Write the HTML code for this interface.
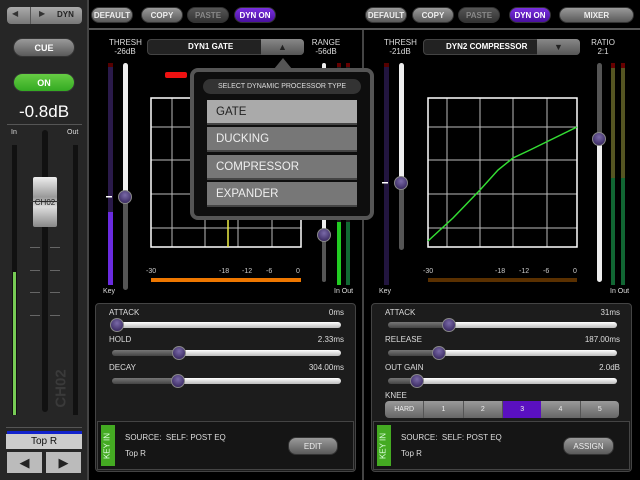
<!DOCTYPE html>
<html><head><meta charset="utf-8"><style>
*{margin:0;padding:0;box-sizing:border-box}
body{width:640px;height:480px;background:#000;position:relative;overflow:hidden;font-family:"Liberation Sans",sans-serif;color:#ddd}
.a{position:absolute}
.btn{position:absolute;height:16px;border-radius:8px;background:linear-gradient(#9a9a9a,#5a5a5a);color:#eee;font-size:8px;font-weight:bold;text-align:center;line-height:16px;border:1px solid #333}
.pur{background:linear-gradient(#7a30e0,#4a10a0);color:#fff}
.dk{background:linear-gradient(#555,#333);color:#888}
.lbl{position:absolute;font-size:8px;color:#ddd}
.track{position:absolute;height:6px;border-radius:3px;background:linear-gradient(#fff,#bbb)}
.trk0{position:absolute;height:6px;border-radius:3px;background:linear-gradient(#777,#444)}
.knob{position:absolute;width:14px;height:14px;border-radius:7px;background:radial-gradient(circle at 50% 35%,#7a6aa8,#2a1a50);border:1px solid #888}
.item{position:absolute;left:207px;width:150px;height:25px;background:#777;color:#eee;font-size:11.5px;line-height:25px;padding-left:9px;border-bottom:2px solid #444}
.kin{position:absolute;width:41px;height:14px;font-size:8px;color:#dfd;transform:rotate(-90deg);text-align:center;line-height:14px}
</style></head><body>
<div class="a" style="left:0;top:0;width:88px;height:480px;background:#262626"></div>
<div class="a" style="left:7px;top:7px;width:75px;height:17px;border-radius:4px;background:linear-gradient(#aaa,#777)"></div>
<div class="a" style="left:30px;top:7px;width:1px;height:17px;background:#555"></div>
<div class="a" style="left:12px;top:9px;font-size:8px;color:#333">◀</div>
<div class="a" style="left:39px;top:9px;font-size:8px;color:#333">▶</div>
<div class="a" style="left:57px;top:10px;font-size:8px;font-weight:bold;color:#222">DYN</div>
<div class="btn" style="left:13px;top:38px;width:62px;height:19px;line-height:19px;border-radius:10px;font-size:9px;color:#fff">CUE</div>
<div class="btn" style="left:13px;top:73px;width:62px;height:19px;line-height:19px;border-radius:10px;font-size:9px;background:linear-gradient(#6c4,#3a2);color:#fff">ON</div>
<div class="a" style="left:0;width:88px;top:102px;text-align:center;font-size:17px;color:#fff">-0.8dB</div>
<div class="a" style="left:7px;top:124px;width:75px;height:1px;background:#555"></div>
<div class="lbl" style="left:11px;top:129px;font-size:7px">In</div>
<div class="lbl" style="left:67px;top:129px;font-size:7px">Out</div>
<div class="a" style="left:12px;top:145px;width:5px;height:270px;background:#111"></div>
<div class="a" style="left:13px;top:272px;width:3px;height:143px;background:#7c5"></div>
<div class="a" style="left:73px;top:145px;width:5px;height:270px;background:#111"></div>
<div class="a" style="left:42px;top:130px;width:6px;height:282px;background:#111;border-radius:3px"></div>
<div class="a" style="left:30px;top:247px;width:10px;height:1px;background:#666;box-shadow:0 23px #666,0 45px #666,0 68px #666"></div>
<div class="a" style="left:50px;top:247px;width:10px;height:1px;background:#666;box-shadow:0 23px #666,0 45px #666,0 68px #666"></div>
<div class="a" style="left:33px;top:177px;width:24px;height:50px;background:linear-gradient(#eee,#999 40%,#ddd 60%,#888);border-radius:2px"></div>
<div class="a" style="left:30px;top:201px;width:29px;height:1px;background:#333"></div>
<div class="a" style="left:33px;top:198px;width:24px;text-align:center;font-size:8px;color:#222">CH02</div>
<div class="a" style="left:42px;top:380px;font-size:15px;font-weight:bold;color:#3a3a3a;transform:rotate(-90deg)">CH02</div>
<div class="a" style="left:6px;top:427px;width:76px;height:1px;background:#555"></div>
<div class="a" style="left:7px;top:431px;width:75px;height:3px;background:#12c"></div>
<div class="a" style="left:6px;top:434px;width:76px;height:15px;background:#ccc;color:#111;font-size:10px;text-align:center;line-height:15px">Top R</div>
<div class="a" style="left:7px;top:452px;width:35px;height:21px;background:#bbb;color:#222;font-size:13px;text-align:center;line-height:21px">◀</div>
<div class="a" style="left:46px;top:452px;width:35px;height:21px;background:#bbb;color:#222;font-size:13px;text-align:center;line-height:21px">▶</div>
<div class="a" style="left:87px;top:0;width:2px;height:480px;background:#444"></div>
<div class="a" style="left:89px;top:28px;width:551px;height:2px;background:#555"></div>
<div class="btn" style="left:91px;top:7px;width:42px">DEFAULT</div>
<div class="btn" style="left:141px;top:7px;width:42px">COPY</div>
<div class="btn dk" style="left:187px;top:7px;width:42px">PASTE</div>
<div class="btn pur" style="left:234px;top:7px;width:42px">DYN ON</div>
<div class="btn" style="left:365px;top:7px;width:42px">DEFAULT</div>
<div class="btn" style="left:412px;top:7px;width:42px">COPY</div>
<div class="btn dk" style="left:458px;top:7px;width:42px">PASTE</div>
<div class="btn pur" style="left:509px;top:7px;width:42px">DYN ON</div>
<div class="btn" style="left:559px;top:7px;width:75px">MIXER</div>
<div class="a" style="left:362px;top:30px;width:2px;height:450px;background:#444"></div>

<svg class="a" style="left:0;top:0" width="640" height="480">
<g stroke="#bbb" stroke-width="1" fill="none">
<path d="M172 98V247M205 98V247M238 98V247M272 98V247M151 127H301M151 160H301M151 194H301M151 228H301"/>
<path d="M447 98V247M480 98V247M513 98V247M547 98V247M428 127H577M428 160H577M428 194H577M428 228H577"/>
</g>
<rect x="151" y="98" width="150" height="149" fill="none" stroke="#fff" stroke-width="1.5"/>
<rect x="428" y="98" width="149" height="149" fill="none" stroke="#fff" stroke-width="1.5"/>
<path d="M228 220V247" stroke="#ee4" stroke-width="1.5"/>
<path d="M428 241L453 218L480 190L498 170L513 158L530 150L577 127" stroke="#3d3" stroke-width="1.5" fill="none"/>
<g font-family="Liberation Sans" font-size="7" fill="#ccc">
<text x="146" y="273">-30</text><text x="219" y="273">-18</text><text x="242" y="273">-12</text><text x="266" y="273">-6</text><text x="296" y="273">0</text>
<text x="423" y="273">-30</text><text x="495" y="273">-18</text><text x="519" y="273">-12</text><text x="543" y="273">-6</text><text x="573" y="273">0</text>
</g>
<rect x="151" y="278" width="150" height="4" fill="#e70"/>
<rect x="428" y="278" width="149" height="4" fill="#5a3000"/>
<rect x="165" y="72" width="22" height="6" rx="2" fill="#e11"/>
<rect x="108" y="63" width="5" height="222" fill="#2a1a4a"/><rect x="108" y="212" width="5" height="73" fill="#6a2be0"/><rect x="108" y="63" width="5" height="4" fill="#500"/>
<rect x="106" y="196" width="6" height="1.5" fill="#fff"/>
<rect x="123" y="63" width="5" height="134" rx="2.5" fill="#eee"/><rect x="123" y="197" width="5" height="93" rx="2.5" fill="#555"/>
<rect x="322" y="63" width="4" height="172" rx="2" fill="#eee"/><rect x="322" y="235" width="4" height="47" rx="2" fill="#555"/>
<rect x="337" y="63" width="4" height="222" fill="#1a1a1a"/><rect x="337" y="222" width="4" height="63" fill="#2c2"/><rect x="337" y="63" width="4" height="4" fill="#600"/>
<rect x="346" y="63" width="4" height="222" fill="#1a1a1a"/><rect x="346" y="222" width="4" height="63" fill="#163"/><rect x="346" y="63" width="4" height="4" fill="#600"/>
<rect x="384" y="63" width="5" height="222" fill="#22153f"/><rect x="384" y="63" width="5" height="4" fill="#500"/>
<rect x="382" y="182" width="6" height="1.5" fill="#fff"/>
<rect x="399" y="63" width="5" height="120" rx="2.5" fill="#eee"/><rect x="399" y="183" width="5" height="67" rx="2.5" fill="#555"/>
<rect x="597" y="63" width="5" height="76" rx="2.5" fill="#555"/><rect x="597" y="139" width="5" height="143" rx="2.5" fill="#eee"/>
<rect x="611" y="63" width="4" height="222" fill="#163"/><rect x="611" y="68" width="4" height="110" fill="#552"/><rect x="611" y="63" width="4" height="5" fill="#600"/>
<rect x="621" y="63" width="4" height="222" fill="#163"/><rect x="621" y="68" width="4" height="110" fill="#552"/><rect x="621" y="63" width="4" height="5" fill="#600"/>
</svg>
<div class="knob" style="left:118px;top:190px"></div>
<div class="knob" style="left:317px;top:228px"></div>
<div class="knob" style="left:394px;top:176px"></div>
<div class="knob" style="left:592px;top:132px"></div>
<div class="lbl" style="left:109px;top:38px;text-align:center;width:32px">THRESH<br>-26dB</div>
<div class="lbl" style="left:309px;top:38px;text-align:center;width:34px">RANGE<br>-56dB</div>
<div class="lbl" style="left:384px;top:38px;text-align:center;width:32px">THRESH<br>-21dB</div>
<div class="lbl" style="left:588px;top:38px;text-align:center;width:30px">RATIO<br>2:1</div>
<div class="lbl" style="left:103px;top:288px;font-size:7px">Key</div>
<div class="lbl" style="left:334px;top:288px;font-size:7px">In Out</div>
<div class="lbl" style="left:379px;top:288px;font-size:7px">Key</div>
<div class="lbl" style="left:610px;top:288px;font-size:7px">In Out</div>
<div class="a" style="left:147px;top:39px;width:157px;height:16px;border-radius:4px;background:#222;border:1px solid #444;font-size:8px;font-weight:bold;color:#fff;line-height:14px;padding-left:40px">DYN1 GATE</div>
<div class="a" style="left:261px;top:39px;width:43px;height:16px;border-radius:0 4px 4px 0;background:linear-gradient(#888,#555);color:#222;font-size:9px;text-align:center;line-height:16px">▲</div>
<div class="a" style="left:423px;top:39px;width:157px;height:16px;border-radius:4px;background:#222;border:1px solid #444;font-size:8px;font-weight:bold;color:#fff;line-height:14px;padding-left:22px">DYN2 COMPRESSOR</div>
<div class="a" style="left:537px;top:39px;width:43px;height:16px;border-radius:0 4px 4px 0;background:linear-gradient(#888,#555);color:#222;font-size:9px;text-align:center;line-height:16px">▼</div>
<div class="a" style="left:95px;top:303px;width:261px;height:169px;border:1px solid #444;border-radius:4px;background:#1c1c1c"></div>
<div class="a" style="left:371px;top:303px;width:261px;height:169px;border:1px solid #444;border-radius:4px;background:#1c1c1c"></div>
<div class="lbl" style="left:109px;top:308px">ATTACK</div><div class="lbl" style="left:300px;top:308px;width:44px;text-align:right">0ms</div>
<div class="track" style="left:112px;top:322px;width:229px"></div><div class="knob" style="left:110px;top:318px"></div>
<div class="lbl" style="left:109px;top:335px">HOLD</div><div class="lbl" style="left:290px;top:335px;width:54px;text-align:right">2.33ms</div>
<div class="trk0" style="left:112px;top:350px;width:70px"></div><div class="track" style="left:180px;top:350px;width:161px"></div><div class="knob" style="left:172px;top:346px"></div>
<div class="lbl" style="left:109px;top:363px">DECAY</div><div class="lbl" style="left:290px;top:363px;width:54px;text-align:right">304.00ms</div>
<div class="trk0" style="left:112px;top:378px;width:70px"></div><div class="track" style="left:180px;top:378px;width:161px"></div><div class="knob" style="left:171px;top:374px"></div>
<div class="a" style="left:97px;top:421px;width:257px;height:49px;border:1px solid #444;background:#151515"></div>
<div class="a" style="left:101px;top:425px;width:14px;height:41px;background:#4a2;"></div>
<div class="kin" style="left:87px;top:439px">KEY IN</div>
<div class="lbl" style="left:125px;top:433px">SOURCE:&nbsp; SELF: POST EQ</div>
<div class="lbl" style="left:125px;top:449px">Top R</div>
<div class="btn" style="left:288px;top:437px;width:50px;height:18px;line-height:18px;font-weight:normal">EDIT</div>

<div class="lbl" style="left:385px;top:308px">ATTACK</div><div class="lbl" style="left:570px;top:308px;width:50px;text-align:right">31ms</div>
<div class="trk0" style="left:388px;top:322px;width:64px"></div><div class="track" style="left:450px;top:322px;width:167px"></div><div class="knob" style="left:442px;top:318px"></div>
<div class="lbl" style="left:385px;top:335px">RELEASE</div><div class="lbl" style="left:560px;top:335px;width:60px;text-align:right">187.00ms</div>
<div class="trk0" style="left:388px;top:350px;width:54px"></div><div class="track" style="left:440px;top:350px;width:177px"></div><div class="knob" style="left:432px;top:346px"></div>
<div class="lbl" style="left:385px;top:363px">OUT GAIN</div><div class="lbl" style="left:560px;top:363px;width:60px;text-align:right">2.0dB</div>
<div class="trk0" style="left:388px;top:378px;width:32px"></div><div class="track" style="left:418px;top:378px;width:199px"></div><div class="knob" style="left:410px;top:374px"></div>
<div class="lbl" style="left:385px;top:391px">KNEE</div>
<div class="a" style="left:385px;top:401px;width:234px;height:17px;border-radius:4px;background:linear-gradient(#999,#666);display:flex;font-size:7px;color:#eee;line-height:17px;text-align:center;overflow:hidden">
<div style="flex:1;border-right:1px solid #555">HARD</div><div style="flex:1;border-right:1px solid #555">1</div><div style="flex:1;border-right:1px solid #555">2</div><div style="flex:1;background:#5a10c0">3</div><div style="flex:1;border-right:1px solid #555">4</div><div style="flex:1">5</div></div>
<div class="a" style="left:373px;top:421px;width:257px;height:49px;border:1px solid #444;background:#151515"></div>
<div class="a" style="left:377px;top:425px;width:14px;height:41px;background:#4a2;"></div>
<div class="kin" style="left:363px;top:439px">KEY IN</div>
<div class="lbl" style="left:401px;top:433px">SOURCE:&nbsp; SELF: POST EQ</div>
<div class="lbl" style="left:401px;top:449px">Top R</div>
<div class="btn" style="left:563px;top:437px;width:51px;height:18px;line-height:18px;font-weight:normal">ASSIGN</div>
<div class="a" style="left:274px;top:58px;width:0;height:0;border-left:9px solid transparent;border-right:9px solid transparent;border-bottom:11px solid #555"></div>
<div class="a" style="left:190px;top:68px;width:184px;height:152px;border:4px solid #555;border-radius:8px;background:#0e0e0e"></div>
<div class="a" style="left:203px;top:79px;width:158px;height:15px;border-radius:8px;background:#333;font-size:7px;color:#ddd;text-align:center;line-height:15px">SELECT DYNAMIC PROCESSOR TYPE</div>
<div class="item" style="top:100px;background:#aaa;color:#222">GATE</div>
<div class="item" style="top:127px">DUCKING</div>
<div class="item" style="top:155px">COMPRESSOR</div>
<div class="item" style="top:182px">EXPANDER</div>
</body></html>
